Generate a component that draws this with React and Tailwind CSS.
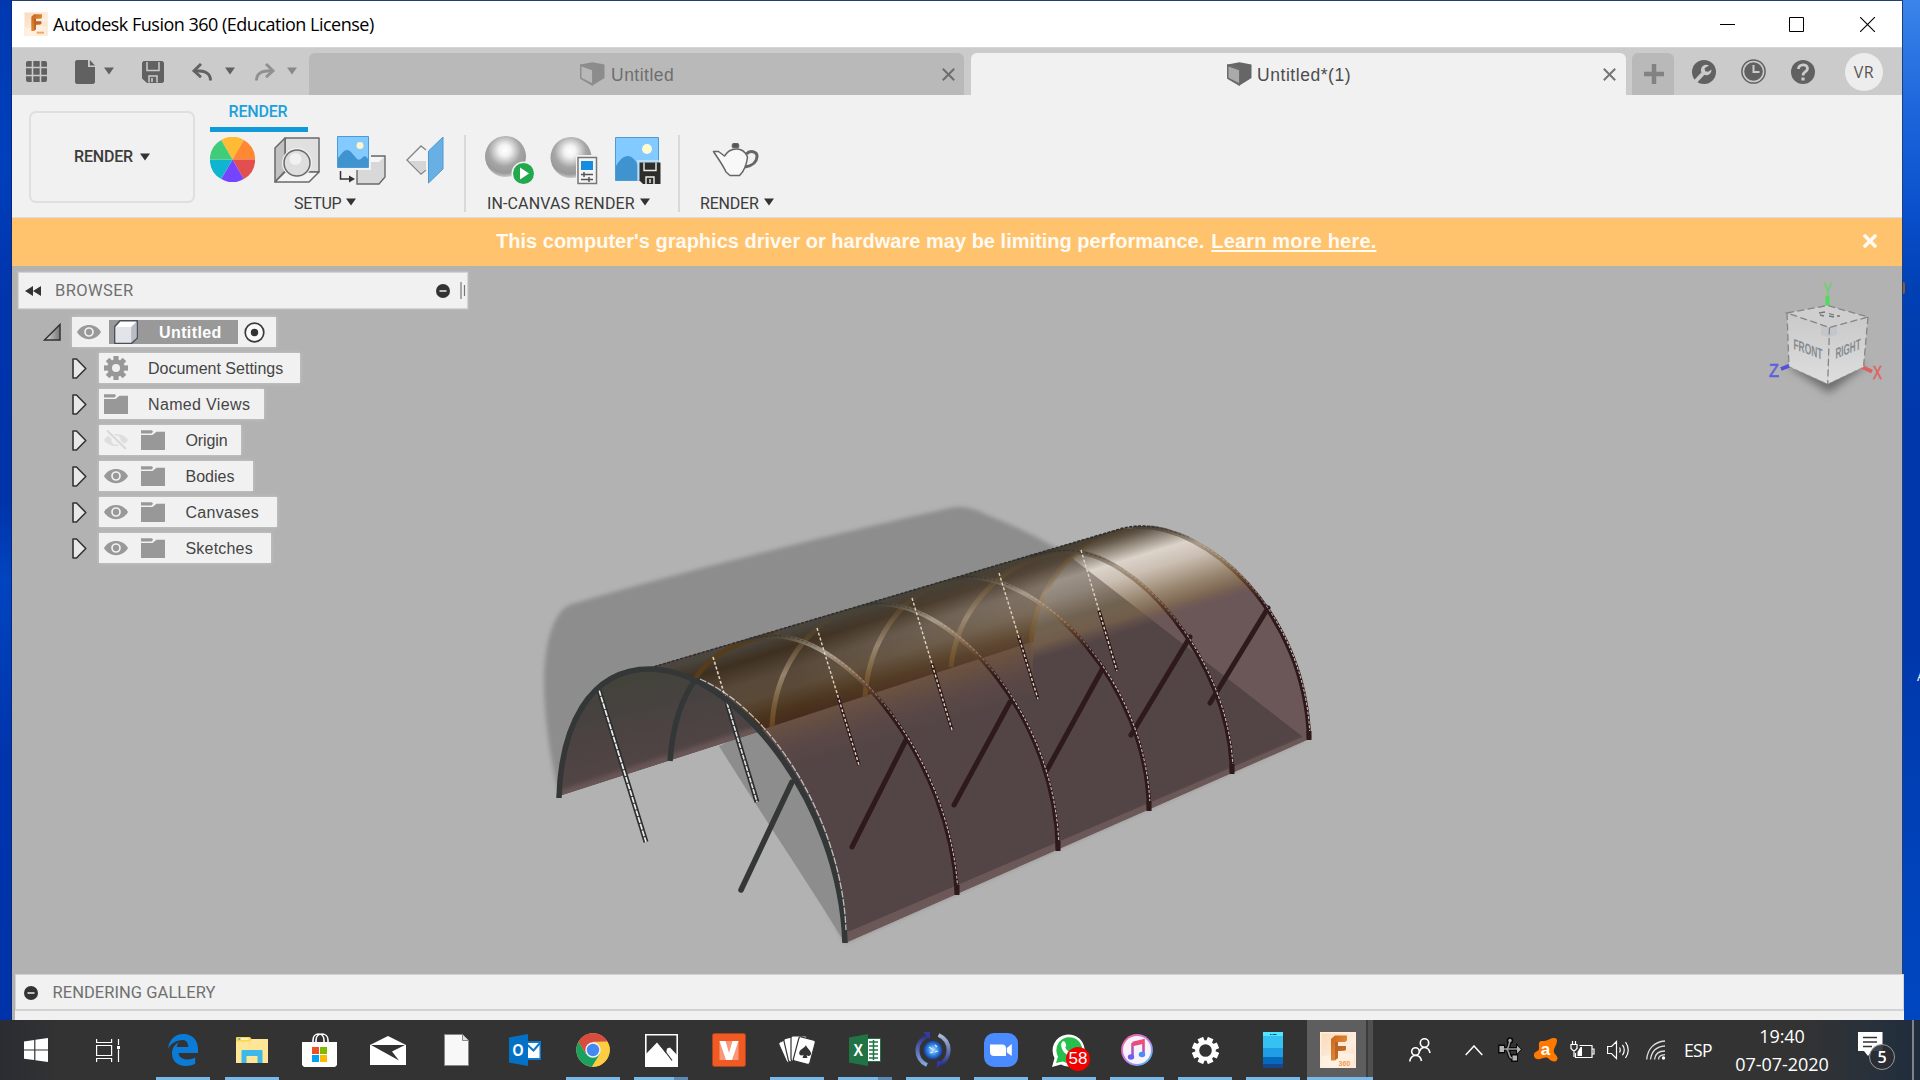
import React from "react";

const ui = "font-['Liberation_Sans',Arial,sans-serif]";
const cap = "font-['Roboto','Liberation_Sans',sans-serif]";
const win = "font-['Open_Sans','Noto_Sans',sans-serif]";

const Caret = ({ className = "" }) => (
  <svg width="10" height="8" viewBox="0 0 10 8" className={className}>
    <path d="M0 .5h10L5 7.5z" fill="currentColor" />
  </svg>
);

const Cross = ({ size = 13, w = 2 }) => (
  <svg width={size} height={size} viewBox="0 0 13 13">
    <path d="M.8.8l11.4 11.4M12.2.8L.8 12.2" stroke="currentColor" strokeWidth={w} fill="none" />
  </svg>
);

const FusionLogo = ({ size, label }) => (
  <svg width={size} height={size} viewBox="0 0 36 36" className="shrink-0">
    <defs>
      <linearGradient id="fl" x1="0" y1="0" x2="1" y2="1">
        <stop offset="0" stopColor="#fbd9b8" />
        <stop offset=".6" stopColor="#fdeee0" />
        <stop offset="1" stopColor="#f8d3ae" />
      </linearGradient>
      <linearGradient id="ff" x1="0" y1="0" x2="1" y2="1">
        <stop offset="0" stopColor="#c8651a" />
        <stop offset="1" stopColor="#eda04a" />
      </linearGradient>
    </defs>
    <path d="M0 0h36v36H0z" fill="#fdeedf" />
    <path d="M1.5 1.5h33v33h-33z" fill="url(#fl)" />
    <path d="M1.5 24L34 21v13.500H1.500z" fill="#fff3e6" opacity=".7" />
    <path d="M11 7l4-3.500h12v5l-2 1.500h-7v4h8v4l-2 1h-6v7l-3 2.500h-4z" fill="url(#ff)" />
    <path d="M15 10h3v4h8v4l-8 1v7l-3 2z" fill="#a8551a" opacity=".6" />
    {label ? (
      <text x="18.500" y="33.500" fontSize="7" fontWeight="700" fontFamily="Liberation Sans" fill="#ee9a55">360</text>
    ) : (
      <path d="M19 31h11" stroke="#f0a868" strokeWidth="3" />
    )}
  </svg>
);

function TitleBar() {
  return (
    <div className="flex h-[46px] shrink-0 items-center bg-white pl-[12px] pr-[27px]">
      <FusionLogo size={24} />
      <span className={`${win} ml-[5px] mt-[1px] text-[18px] tracking-[-0.5px] whitespace-nowrap text-black`}>
        Autodesk Fusion 360 (Education License)
      </span>
      <div className="ml-auto flex items-center">
        <svg width="15" height="15" viewBox="0 0 15 15"><path d="M0 7.500h15" stroke="#000" /></svg>
        <svg width="15" height="15" viewBox="0 0 15 15" className="ml-[54px]"><path d="M.5.5h14v14H.5z" fill="none" stroke="#000" /></svg>
        <svg width="15" height="15" viewBox="0 0 15 15" className="ml-[56px]"><path d="M0 0l15 15M15 0L0 15" stroke="#000" strokeWidth="1.1" /></svg>
      </div>
    </div>
  );
}

const DocCube = ({ dim }) => (
  <svg width="25" height="24" viewBox="0 0 25 24" className="shrink-0">
    <path d="M.5 2.500L12.500.3l12 2.200v13.500L12.500 23.500.5 16.500z" fill={dim ? "#8c8c8c" : "#666"} />
    <path d="M1.500 4.500l10.800 3.800v13L1.500 15.800z" fill={dim ? "#b8b8b8" : "#a9abab"} />
    <path d="M.5 2.500l12 3.700v17.300L.5 16.500z" fill="none" stroke={dim ? "#8f8f8f" : "#6c6c6c"} strokeWidth="1" />
  </svg>
);

function TabBar() {
  return (
    <div className="flex h-[48px] shrink-0 items-end bg-[#cbcbcb] border-t border-[#d6d6d6]">
      <div className="flex h-full w-[297px] shrink-0 items-center text-[#616161]">
        <svg width="21" height="21" viewBox="0 0 21 21" className="ml-[14px] shrink-0" fill="currentColor">
          <rect width="21" height="21" rx="2" />
          <path d="M6.500 0v21M14.500 0v21M0 6.500h21M0 14.500h21" stroke="#cbcbcb" strokeWidth="1.600" />
        </svg>
        <svg width="20" height="24" viewBox="0 0 20 24" className="ml-[28px] shrink-0" fill="currentColor">
          <path d="M1.500 0H13v7h7v15.500L18.500 24h-17L0 22.500v-21z" />
          <path d="M14.800 0L20 5.400h-5.200z" />
        </svg>
        <Caret className="ml-[9px] mb-[2px] shrink-0" />
        <svg width="22" height="22" viewBox="0 0 22 22" className="ml-[28px] shrink-0">
          <path d="M1.500 0h19L22 1.500v19L20.500 22H5l-5-4.500v-16z" fill="currentColor" />
          <path d="M5 1v8.500h12V1M7 21.500V15h8v6.500" fill="none" stroke="#cbcbcb" strokeWidth="1.500" />
          <path d="M10 17v4" stroke="#cbcbcb" strokeWidth="1.600" />
        </svg>
        <svg width="20" height="18" viewBox="0 0 20 18" className="ml-[28px] shrink-0" fill="none" stroke="currentColor" strokeWidth="2.900">
          <path d="M18.500 17.500C18.500 10.500 14 7.600 2.500 7.800" />
          <path d="M9 1L2 7.800l7 6.400" />
        </svg>
        <Caret className="ml-[13px] mb-[2px] shrink-0" />
        <svg width="20" height="18" viewBox="0 0 20 18" className="ml-[20px] shrink-0 text-[#909090]" fill="none" stroke="currentColor" strokeWidth="2.900">
          <path d="M1.500 17.500C1.500 10.500 6 7.600 17.500 7.800" />
          <path d="M11 1l7 6.800-7 6.400" />
        </svg>
        <Caret className="ml-[12px] mb-[2px] shrink-0 text-[#8a8a8a]" />
      </div>
      <div className="flex h-[42px] w-[655px] items-center rounded-t-[6px] bg-[#b9b9b9] pr-[9px] text-[#6e6e6e]">
        <div className="ml-[271px]"><DocCube dim /></div>
        <span className={`${ui} ml-[6px] mt-[2px] text-[17.5px] tracking-[0.5px]`}>Untitled</span>
        <span className="ml-auto"><Cross /></span>
      </div>
      <div className="ml-[7px] flex h-[42px] w-[655px] items-center rounded-t-[6px] bg-[#f1f1f1] pr-[10px] text-[#4c4c4c]">
        <div className="ml-[256px]"><DocCube /></div>
        <span className={`${ui} ml-[5px] mt-[2px] text-[17.5px] tracking-[0.55px]`}>Untitled*(1)</span>
        <span className="ml-auto text-[#757575]"><Cross /></span>
      </div>
      <div className="ml-[6px] flex h-[42px] w-[42px] items-center justify-center rounded-t-[6px] bg-[#b9b9b9] pl-[1px]">
        <svg width="20" height="20" viewBox="0 0 20 20"><path d="M10 0v20M0 10h20" stroke="#828282" strokeWidth="4.500" /></svg>
      </div>
      <div className="flex h-full flex-1 items-center pl-[18px]">
        <svg width="24" height="24" viewBox="0 0 24 24">
          <circle cx="12" cy="12" r="12" fill="#616161" />
          <path d="M3.500 21.500l7.500-8" stroke="#cbcbcb" strokeWidth="4" />
          <path d="M17 5.500a5.300 5.300 0 1 0 2.500 4l-3.300 2.300-3-.6-.6-3z" fill="#cbcbcb" />
        </svg>
        <svg width="25" height="25" viewBox="0 0 25 25" className="ml-[25px]">
          <circle cx="12.500" cy="12.500" r="11.600" fill="none" stroke="#616161" strokeWidth="1.500" />
          <circle cx="12.500" cy="12.500" r="9.300" fill="#616161" />
          <path d="M12.500 6v7h6" fill="none" stroke="#cbcbcb" strokeWidth="2" />
        </svg>
        <svg width="24" height="24" viewBox="0 0 24 24" className="ml-[25px]">
          <circle cx="12" cy="12" r="12" fill="#616161" />
          <path d="M7.500 9c0-5.500 9-5.500 9-.5 0 3.500-4.500 3-4.500 7" fill="none" stroke="#cbcbcb" strokeWidth="2.800" />
          <path d="M10.400 17.500h3.200v3h-3.200z" fill="#cbcbcb" />
        </svg>
        <div className={`${win} ml-[30px] flex size-[38px] items-center justify-center rounded-full bg-[#ededed] text-[16px] tracking-[0.5px] text-[#555]`}>VR</div>
      </div>
    </div>
  );
}

const Sphere = ({ id, cx, cy, r }) => (
  <>
    <defs>
      <radialGradient id={id} cx=".48" cy=".35" r=".65">
        <stop offset="0" stopColor="#fff" />
        <stop offset=".22" stopColor="#f2f2f2" />
        <stop offset=".6" stopColor="#a5a5a5" />
        <stop offset=".85" stopColor="#999" />
        <stop offset="1" stopColor="#c9c9c9" />
      </radialGradient>
    </defs>
    <circle cx={cx} cy={cy} r={r} fill={`url(#${id})`} />
  </>
);

const Group = ({ label, width, pad, text, children }) => (
  <div className={`flex ${width} flex-col`}>
    <div className={`flex h-[61px] items-start ${pad}`}>{children}</div>
    <div className={`flex items-center ${text} ${cap} text-[16px] leading-[22px] text-[#3c3c3c] whitespace-nowrap`}>
      {label}
      <Caret className="ml-[5px] mb-[5px] text-[#333]" />
    </div>
  </div>
);

const wheel = ["#ffbb33", "#ff8833", "#e34f4f", "#7544ff", "#0fb5cf", "#40cc78"];

function Ribbon() {
  return (
    <div className="flex h-[123px] shrink-0 border-b border-[#dcdcdc] bg-[#f1f1f1]">
      <div className={`${cap} ml-[17px] mt-[16px] flex h-[92px] w-[166px] items-center justify-center rounded-[7px] border-2 border-[#dfdfdf] text-[16px] font-medium tracking-[-0.2px] text-[#3c3c3c]`}>
        RENDER
        <Caret className="ml-[7px] mb-[1px] text-[#333]" />
      </div>
      <div className="ml-[15px] flex flex-col">
        <div className={`${cap} flex h-[37px] w-[98px] items-center justify-center border-b-[5px] border-[#0f9ad9] pt-[2px] text-[16px] font-medium tracking-[-0.2px] text-[#1ba0dc]`}>
          <span className="ml-[-2px]">RENDER</span>
        </div>
        <div className="flex">
          <Group label="SETUP" width="w-[254px]" pad="pt-[5px]" text="pl-[84px] tracking-[-0.3px]">
            <svg width="45" height="45" viewBox="-22.500 -22.500 45 45">
              {wheel.map((c, i) => (
                <path key={c} d="M0 0L-11.300-19.600A22.600 22.600 0 0 1 11.300-19.600z" fill={c} transform={`rotate(${i * 60})`} />
              ))}
            </svg>
            <svg width="46" height="46" viewBox="0 0 46 46" className="ml-[19px]" stroke="#6a6a6a" strokeWidth="1.500" strokeLinejoin="round">
              <path d="M11 1h34v34H11z" fill="#e0e0e0" />
              <path d="M11 1v33L1 45V11z" fill="#c2c2c2" />
              <path d="M11 35h34L35 45H1z" fill="#f4f4f4" />
              <circle cx="23" cy="26" r="15" fill="#f1f1f1" stroke="none" />
              <circle cx="23" cy="26" r="13" fill="#dedede" />
              <circle cx="21.500" cy="22" r="6" fill="#f1f1f1" stroke="none" />
            </svg>
            <svg width="49" height="50" viewBox="0 0 49 50" className="-mt-[1px] ml-[17px]">
              <path d="M20 26l6-6h22v21l-6 7H20z" fill="#d8d8d8" stroke="#6a6a6a" strokeWidth="1.400" />
              <path d="M21 26l6-5h20l-5 5z" fill="#f6f6f6" />
              <path d="M0 0h34v34H0z" fill="#f1f1f1" />
              <path d="M.5.5h31v31H.5z" fill="#82caff" stroke="#4c9bd6" />
              <path d="M1 22l5-6q4-4 8 0l6 7q3 2 6-2 3-2 5 2v8H1z" fill="#3f93cf" />
              <circle cx="23" cy="9.500" r="3.500" fill="#fff6c8" />
              <path d="M3.500 35v8H13" fill="none" stroke="#333" strokeWidth="1.500" />
              <path d="M12 39.500l6 3.500-6 3.500z" fill="#333" />
            </svg>
            <svg width="38" height="48" viewBox="0 0 38 48" className="-mt-[1px] ml-[20px]">
              <path d="M20 14l-5-4L1 24l14 14 5-4" fill="#f4f4f4" stroke="#888" strokeWidth="1.400" />
              <path d="M3 25h17v8l-5 4z" fill="#d5d5d5" />
              <path d="M22.500 15L37 1v32L22.500 47z" fill="#68b0e4" stroke="#5099cf" />
            </svg>
          </Group>
          <div className="mt-[3px] h-[77px] w-[2px] bg-[#d9d9d9]" />
          <Group label="IN-CANVAS RENDER" width="w-[212px]" pad="pt-[3px] pl-[19px]" text="pl-[21px] tracking-[0.12px]">
            <svg width="50" height="50" viewBox="0 0 50 50">
              <Sphere id="s1" cx="20.500" cy="21.500" r="20.500" />
              <circle cx="38.500" cy="38.500" r="12" fill="#f1f1f1" />
              <circle cx="38.500" cy="38.500" r="10.500" fill="#22a94e" />
              <path d="M35 32.500l9 6-9 6z" fill="#fff" />
            </svg>
            <svg width="50" height="50" viewBox="0 0 50 50" className="ml-[15px]">
              <Sphere id="s2" cx="21" cy="22.500" r="20.500" />
              <path d="M26 20h24v30H26z" fill="#f1f1f1" />
              <path d="M28 22.500h18.500v26H28z" fill="#f5f5f5" stroke="#777" strokeWidth="1.500" />
              <path d="M31 26h12v9H31z" fill="#168de2" />
              <path d="M31 39.500h12M31 44.500h12M34 37v5M39 42v5" stroke="#555" strokeWidth="1.500" />
            </svg>
            <svg width="47" height="50" viewBox="0 0 47 50" className="ml-[15px]">
              <path d="M.5 2.500h43v43H.5z" fill="#82caff" stroke="#4c9bd6" />
              <path d="M1 31c7-12 15-14 22-1v15H1z" fill="#3f93cf" />
              <circle cx="32" cy="14" r="5" fill="#fffad0" />
              <path d="M22 25h25v25H22z" fill="#f1f1f1" opacity=".5" />
              <path d="M24.500 27.500h21v21.500H28l-3.500-3.500z" fill="#2d2d2a" />
              <path d="M29 27.500v8h12v-8M31 49v-7h8v7M35 44v4" fill="none" stroke="#eee" strokeWidth="1.400" />
            </svg>
          </Group>
          <div className="mt-[3px] h-[77px] w-[2px] bg-[#d9d9d9]" />
          <Group label="RENDER" width="w-[120px]" pad="pt-[11px] pl-[32px]" text="pl-[20px] tracking-[-0.2px]">
            <svg width="48" height="35" viewBox="0 0 48 35" fill="none" stroke="#666" strokeWidth="1.500" strokeLinejoin="round">
              <path d="M1.500 8.500h5l6 4.500c3-5 6-7 12-7s9 3 11 8c-.5 5-2 10-5 15l-3 3.500H18L14 29C11 22 5 14 1.500 8.500z" fill="#f8f8f8" />
              <path d="M21 4.500a3 3 0 1 1 5 0z" fill="#555" />
              <path d="M34.500 11c3-4 11-3 10.500 3-.5 6-6 9-12 10" stroke="#666" strokeWidth="3" />
            </svg>
          </Group>
        </div>
      </div>
    </div>
  );
}

function Banner() {
  return (
    <div className={`${ui} flex h-[48px] shrink-0 items-center bg-[#ffc26d] pb-[2px] pl-[484px] pr-[25px] text-[20px] font-bold text-[#fffaf2] whitespace-nowrap`}>
      <span className="tracking-[0.015px]">This computer's graphics driver or hardware may be limiting performance.</span>
      <span className="ml-[7px] underline decoration-2 underline-offset-2 tracking-[0.18px]">Learn more here.</span>
      <span className="ml-auto"><Cross size={14} w={3.4} /></span>
    </div>
  );
}

const Eye = ({ off }) =>
  off ? (
    <svg width="24" height="20" viewBox="0 0 24 20">
      <path d="M0 10C5 2 19 2 24 10 19 18 5 18 0 10z" fill="#dedede" />
      <circle cx="12" cy="10" r="4.500" fill="#f1f1f1" />
      <path d="M2 0l20 19" stroke="#f1f1f1" strokeWidth="5" />
      <path d="M3 .5l19 18.500" stroke="#d8d8d8" strokeWidth="2" />
    </svg>
  ) : (
    <svg width="24" height="16" viewBox="0 0 24 16">
      <path d="M0 8C5-1.500 19-1.500 24 8 19 17.500 5 17.500 0 8z" fill="#999" />
      <circle cx="12" cy="8" r="4" fill="none" stroke="#f1f1f1" strokeWidth="1.700" />
    </svg>
  );

const Folder = () => (
  <svg width="24" height="20" viewBox="0 0 24 20" fill="#989898">
    <path d="M0 .3h11l1 1.500-1.500 1.700H0z" />
    <path d="M0 5h11.500l4-3.200H24V20H0z" />
  </svg>
);

const Gear = () => (
  <svg width="24" height="24" viewBox="-12 -12 24 24">
    {[0, 45, 90, 135].map((a) => (
      <path key={a} d="M-2.600-12h5.200v24h-5.200z" fill="#989898" transform={`rotate(${a})`} />
    ))}
    <circle r="8.700" fill="#989898" />
    <circle r="4" fill="#f1f1f1" />
  </svg>
);

const MinusDot = () => (
  <svg width="14" height="14" viewBox="0 0 14 14">
    <circle cx="7" cy="7" r="7" fill="#333" />
    <path d="M3.500 7h7" stroke="#eee" strokeWidth="1.500" />
  </svg>
);

const nodes = [
  { name: "Document Settings", icon: "gear", w: "w-[201px]", t: "tracking-[0px]" },
  { name: "Named Views", icon: "folder", w: "w-[165px]", t: "tracking-[0.35px]" },
  { name: "Origin", eye: "off", w: "w-[142px]", t: "tracking-[-0.1px]" },
  { name: "Bodies", eye: "on", w: "w-[154px]", t: "tracking-[0px]" },
  { name: "Canvases", eye: "on", w: "w-[178px]", t: "tracking-[0.3px]" },
  { name: "Sketches", eye: "on", w: "w-[172px]", t: "tracking-[0.2px]" },
];

function BrowserPanel() {
  return (
    <div className="relative z-10 ml-[6px] mt-[6px] flex w-[450px] flex-col">
      <div className="flex h-[37px] items-center border border-[#d4d4d4] bg-[#f1f1f1] outline outline-[#c4c4c4]/50">
        <svg width="16" height="10" viewBox="0 0 16 10" className="ml-[6px] mt-[1px]"><path d="M8 0v10L0 5zM16 0v10L8 5z" fill="#333" /></svg>
        <span className={`${cap} ml-[14px] mt-[2px] text-[16.5px] tracking-[0.4px] text-[#707070]`}>BROWSER</span>
        <span className="ml-auto"><MinusDot /></span>
        <svg width="6" height="17" viewBox="0 0 6 17" className="ml-[10px] mr-[1px]"><path d="M1 0v17M4.500 3v11" stroke="#777" strokeWidth="1.200" /></svg>
      </div>
      <div className="mt-[8px] flex h-[30px] items-center">
        <svg width="18" height="18" viewBox="0 0 18 18" className="ml-[25px] mr-[11px]">
          <defs><linearGradient id="tr"><stop offset="0" stopColor="#ddd" /><stop offset="1" stopColor="#777" /></linearGradient></defs>
          <path d="M17 1.500V17H1.500z" fill="url(#tr)" stroke="#333" strokeWidth="1.500" />
        </svg>
        <div className="flex h-[30px] w-[204px] items-center bg-[#f1f1f1] pl-[5px] shadow-[0_0_4px_#c8c8c8]">
          <Eye />
          <div className="ml-[8px] flex h-[24px] w-[129px] items-center bg-[#999]">
            <svg width="24" height="24" viewBox="0 0 24 24" className="ml-[5px]" strokeLinejoin="round">
              <path d="M.8 6.500L6 .8h17.200V18l-5.500 5.200H.8z" fill="#fff" stroke="#4a4f5c" strokeWidth="1.600" />
              <path d="M1.600 7h15.500v15.400H1.600z" fill="#e2e4ea" />
              <path d="M17.100 7l5.300-5.300V17.600l-5.300 4.800z" fill="#b9bcc6" />
            </svg>
            <span className={`${ui} ml-[21px] mt-[1px] text-[16px] font-bold tracking-[0.4px] text-white`}>Untitled</span>
          </div>
          <svg width="21" height="21" viewBox="0 0 21 21" className="ml-[6px]">
            <circle cx="10.500" cy="10.500" r="9.300" fill="#fafafa" stroke="#3c3c3c" strokeWidth="1.700" />
            <circle cx="10.500" cy="10.500" r="3.700" fill="#333" />
          </svg>
        </div>
      </div>
      {nodes.map((n) => (
        <div key={n.name} className="mt-[6px] flex h-[30px] items-center">
          <svg width="15" height="21" viewBox="0 0 15 21" className="ml-[54px] mr-[12px]">
            <path d="M1 1h3.500L13.800 10.500 4.500 20H1z" fill="#e8e8e8" stroke="#333" strokeWidth="1.600" strokeLinejoin="round" />
          </svg>
          <div className={`flex h-[30px] ${n.w} items-center bg-[#f1f1f1] pl-[4.5px] shadow-[0_0_4px_#c8c8c8]`}>
            {n.eye && <div className="mr-[13.5px]"><Eye off={n.eye === "off"} /></div>}
            {n.icon === "gear" ? <Gear /> : <Folder />}
            <span className={`${ui} ${n.t} ml-[20.5px] mt-[1px] whitespace-nowrap text-[16px] text-[#454545]`}>{n.name}</span>
          </div>
        </div>
      ))}
    </div>
  );
}

const ribs = [
  "M737 642Q755 637 775 636C850 638 950 760 957 893",
  "M847 609Q862 604 880 604C955 604 1055 715 1058 849",
  "M933 583Q948 578 966 577C1045 576 1147 685 1149 809",
  "M1030 557Q1048 551 1066 551C1135 550 1230 660 1232 772",
  "M1137 527C1207 524 1305 612 1309 738",
];
const farRibs = [
  "M772 727C774 680 800 614 877 602",
  "M865 697C868 650 895 588 963 576",
  "M951 667C956 620 990 563 1063 551",
  "M1031 642C1036 595 1065 540 1132 529",
];
const poles = [
  [817, 628, 859, 765],
  [912, 598, 952, 730],
  [999, 573, 1038, 699],
  [1081, 550, 1117, 671],
];
const braces = [
  [907, 738, 852, 847],
  [1010, 702, 954, 805],
  [1103, 668, 1047, 770],
  [1190, 637, 1131, 735],
  [1268, 608, 1210, 703],
];
const frontArch = "M559 798C561 728 588 669 650 669C735 670 840 800 845 943";
const shell = "M645 669L1113 531Q1125 527 1137 526C1207 524 1305 612 1309 739L845 943C840 800 735 670 650 669z";
const crest = "M640 671L1113 531.500L1137 527L1360 500V1000H640z";

function Model() {
  return (
    <svg width="1890" height="708" viewBox="12 266 1890 708" className="absolute inset-0">
      <defs>
        <filter id="b2" x="-5%" y="-5%" width="110%" height="110%"><feGaussianBlur stdDeviation="2" /></filter>
        <filter id="b1"><feGaussianBlur stdDeviation="0.5" /></filter>
        <clipPath id="cs"><path d={shell} /></clipPath>
        <clipPath id="cc"><path d={crest} /></clipPath>
        <clipPath id="ci"><path d="M559 796C561 728 588 669 650 669C700 670 735 700 761 731z" /></clipPath>
        <linearGradient id="amber" gradientUnits="userSpaceOnUse" x1="1000" y1="564" x2="1027" y2="650">
          <stop offset="0" stopColor="#4a463e" />
          <stop offset=".18" stopColor="#3e3021" />
          <stop offset=".42" stopColor="#57483a" />
          <stop offset=".62" stopColor="#5a4936" />
          <stop offset=".84" stopColor="#4a331c" />
          <stop offset="1" stopColor="#45291f" />
        </linearGradient>
        <linearGradient id="shine" gradientUnits="userSpaceOnUse" x1="1110" y1="531" x2="1140" y2="628">
          <stop offset="0" stopColor="#3c3428" />
          <stop offset=".1" stopColor="#64594a" />
          <stop offset=".32" stopColor="#dcd3ca" />
          <stop offset=".48" stopColor="#cbbfb3" />
          <stop offset=".72" stopColor="#98866f" />
          <stop offset=".87" stopColor="#7d6653" />
          <stop offset="1" stopColor="#6a5656" stopOpacity="0" />
        </linearGradient>
        <linearGradient id="shade" gradientUnits="userSpaceOnUse" x1="1110" y1="531" x2="1140" y2="628">
          <stop offset="0" stopColor="#33291e" stopOpacity=".35" />
          <stop offset=".7" stopColor="#33291e" stopOpacity=".42" />
          <stop offset="1" stopColor="#33291e" stopOpacity="0" />
        </linearGradient>
        <linearGradient id="lift" gradientUnits="userSpaceOnUse" x1="780" y1="640" x2="1090" y2="560">
          <stop offset="0" stopColor="#fff" stopOpacity="0" />
          <stop offset=".5" stopColor="#fff" stopOpacity=".2" />
          <stop offset="1" stopColor="#fff" stopOpacity=".4" />
        </linearGradient>
        <mask id="mR" maskUnits="userSpaceOnUse" x="500" y="480" width="850" height="500"><path d="M500 480h850v500H500z" fill="url(#lift)" /></mask>
        <linearGradient id="under" gradientUnits="userSpaceOnUse" x1="770" y1="724" x2="785" y2="775">
          <stop offset="0" stopColor="#735740" stopOpacity=".75" />
          <stop offset=".55" stopColor="#5e4847" stopOpacity=".6" />
          <stop offset="1" stopColor="#5a4848" stopOpacity="0" />
        </linearGradient>
        <linearGradient id="inner" gradientUnits="userSpaceOnUse" x1="640" y1="672" x2="660" y2="770">
          <stop offset="0" stopColor="#42433a" />
          <stop offset=".35" stopColor="#474240" />
          <stop offset="1" stopColor="#534545" />
        </linearGradient>
        <linearGradient id="ribc" gradientUnits="userSpaceOnUse" x1="1000" y1="564" x2="1030" y2="668">
          <stop offset="0" stopColor="#35342f" stopOpacity=".5" />
          <stop offset=".12" stopColor="#5d5242" />
          <stop offset=".32" stopColor="#a89a8a" />
          <stop offset=".55" stopColor="#8d7458" />
          <stop offset=".78" stopColor="#5c3c28" />
          <stop offset="1" stopColor="#2e181a" />
        </linearGradient>
        <linearGradient id="dash" gradientUnits="userSpaceOnUse" x1="1000" y1="564" x2="1060" y2="770">
          <stop offset="0" stopColor="#2a2a28" />
          <stop offset=".1" stopColor="#4a443a" />
          <stop offset=".2" stopColor="#d8cdc0" stopOpacity=".55" />
          <stop offset=".45" stopColor="#b9a9a0" stopOpacity=".6" />
          <stop offset=".65" stopColor="#f0e6e0" />
          <stop offset="1" stopColor="#e8dfdb" />
        </linearGradient>
        <linearGradient id="farc" gradientUnits="userSpaceOnUse" x1="1000" y1="564" x2="1027" y2="650">
          <stop offset="0" stopColor="#55401f" stopOpacity=".1" />
          <stop offset=".2" stopColor="#6f5637" stopOpacity=".8" />
          <stop offset=".45" stopColor="#a08e78" />
          <stop offset=".75" stopColor="#7d6038" />
          <stop offset="1" stopColor="#6a4520" />
        </linearGradient>
      </defs>

      <path d="M559 793C550 760 544 715 544 680C545 635 556 609 572 604C680 572 850 530 950 508Q965 504 985 514C1020 528 1040 538 1070 556L1305 740L845 943C810 880 775 810 722 740L650 700z" fill="#8d8d8d" filter="url(#b2)" />
      <path d="M561 799L722 745C765 815 805 880 838 938L700 960L560 880z" fill="#b2b2b2" />
      <path d="M719 746L761 729C795 775 838 860 842 938C806 880 760 812 719 746z" fill="#8d8d8d" filter="url(#b1)" />

      <g clipPath="url(#ci)">
        <path d="M540 660h240v150H540z" fill="url(#inner)" />
        <path d="M559 797L762 731" stroke="#6b5656" strokeWidth="12" filter="url(#b2)" />
      </g>
      <path d="M670 761C673 722 682 698 697 677" fill="none" stroke="#343737" strokeWidth="5.500" />

      <g clipPath="url(#cs)">
        <path d="M640 500h700v450H640z" fill="#6b5757" />
        <path d="M640 500H1000L1072 558L1303 737L850 931L640 900z" fill="#534545" />
        <path d="M1031 642C1036 595 1065 540 1132 529L1150 500H1340V760L1031 760z" fill="url(#shine)" />
        <path d="M1031 700V642C1034 610 1050 575 1072 558L1240 688z" fill="url(#shade)" />
        <path d="M690 752L1033 640L1033 760L720 830z" fill="url(#under)" />
        <path d="M640 673L1113 529L1132 529C1065 540 1036 595 1031 642L770 727L700 750L640 740z" fill="url(#amber)" />
        <g mask="url(#mR)">
          <path d="M700 652L1113 528L1132 529C1065 540 1036 595 1031 642L770 727z" fill="url(#shine)" />
        </g>
        <path d="M845 943L1309 739" stroke="#6d5959" strokeWidth="7" filter="url(#b2)" />
        <g fill="none" strokeWidth="5" filter="url(#b1)">
          <path d="M690 688C702 662 725 644 775 634" stroke="#553c1c" />
          {farRibs.map((d) => <path key={d} d={d} stroke="url(#farc)" opacity=".85" />)}
        </g>
      </g>
      <path d="M650 668L1113 531Q1125 527 1137 526Q1160 525 1190 538" fill="none" stroke="#2e2f2c" strokeWidth="1.600" strokeDasharray="3 1.500" />

      <g stroke="#2e191b" strokeWidth="5" strokeLinecap="round">
        {braces.map((b) => <line key={b[0]} x1={b[0]} y1={b[1]} x2={b[2]} y2={b[3]} />)}
      </g>
      <g fill="none" clipPath="url(#cc)">
        {ribs.map((d) => (
          <g key={d}>
            <path d={d} stroke="url(#ribc)" strokeWidth="4.400" />
            <path d={d} stroke="url(#dash)" strokeWidth="1.100" strokeDasharray="3 1.600" opacity=".8" transform="translate(1 -.5)" />
          </g>
        ))}
      </g>
      <g fill="#2e191b">
        <path d="M954.500 885h5v10h-5zM1055.500 841h5v10h-5zM1146.500 801h5v10h-5zM1229.500 764h5v10h-5zM1306.500 731h5v9h-5z" />
      </g>
      {poles.map((p) => (
        <g key={p[0]}>
          <line x1={(p[0] + p[2]) / 2} y1={(p[1] + p[3]) / 2} x2={p[2]} y2={p[3]} stroke="#2e191b" strokeWidth="3.400" />
          <line x1={p[0]} y1={p[1]} x2={p[2]} y2={p[3]} stroke="#e3d3bf" strokeWidth="1.400" strokeDasharray="3 2" />
        </g>
      ))}

      <line x1="713" y1="657" x2="727" y2="703" stroke="#e3d3bf" strokeWidth="1.600" strokeDasharray="3 2" />
      <line x1="727" y1="703" x2="757" y2="802" stroke="#2c2e2e" strokeWidth="5" />
      <line x1="727" y1="703" x2="757" y2="802" stroke="#e0e0e0" strokeWidth="1.600" strokeDasharray="5 1" />
      <line x1="599" y1="690" x2="646" y2="842" stroke="#2c2e2e" strokeWidth="5" />
      <line x1="599" y1="690" x2="646" y2="842" stroke="#ececec" strokeWidth="1.700" strokeDasharray="6 1" />
      <line x1="792" y1="782" x2="741" y2="890" stroke="#353636" strokeWidth="5.500" strokeLinecap="round" />
      <path d={frontArch} fill="none" stroke="#343737" strokeWidth="5.500" />
      <path d="M700 679C775 712 842 825 846 930" fill="none" stroke="#dcdcdc" strokeWidth="1.300" strokeDasharray="7 1.500" opacity=".8" />
    </svg>
  );
}

function ViewCube() {
  return (
    <svg width="150" height="130" viewBox="1760 276 150 130" className="absolute left-[1748px] top-[10px]">
      <defs>
        <linearGradient id="cl" x1="0" y1="0" x2="0" y2="1"><stop offset="0" stopColor="#c9c9c9" /><stop offset="1" stopColor="#dedede" /></linearGradient>
        <filter id="cb" x="-40%" y="-40%" width="180%" height="180%"><feGaussianBlur stdDeviation="4" /></filter>
      </defs>
      <path d="M1788 366L1828 350L1865 366L1829 393z" fill="#6d6d6d" filter="url(#cb)" />
      <path d="M1827.500 296v10" stroke="#4fdc58" strokeWidth="4" />
      <path d="M1790 365.500l-9 3.500" stroke="#5252d8" strokeWidth="4" />
      <path d="M1862 367l10 4.500" stroke="#dc6262" strokeWidth="4" />
      <g fontFamily="Liberation Sans" fontSize="18" fontWeight="400" strokeWidth=".6">
        <text x="1823" y="296" fill="#70d070" stroke="#70d070" textLength="9" lengthAdjust="spacingAndGlyphs">Y</text>
        <text x="1769" y="377" fill="#6060dd" stroke="#6060dd" textLength="10" lengthAdjust="spacingAndGlyphs">Z</text>
        <text x="1873" y="379" fill="#dd6464" stroke="#dd6464" textLength="9" lengthAdjust="spacingAndGlyphs">X</text>
      </g>
      <path d="M1787 313L1829.500 327.500L1827.700 384L1789 366.500z" fill="url(#cl)" />
      <path d="M1829.500 327.500L1868 317L1863.500 367L1827.700 384z" fill="url(#cl)" />
      <path d="M1787 313L1827.500 305.500L1868 317L1829.500 327.500z" fill="#cfcfcf" />
      <path d="M1821 325l8.500 2.500 7.500-2v9l-8 2.500-8-2z" fill="#c3c6ca" />
      <path d="M1787 313L1827.500 305.500L1868 317L1829.500 327.500zM1787 313L1789 366.500M1868 317L1863.500 367M1829.500 327.500L1827.700 384" fill="none" stroke="#858585" strokeWidth="1.300" strokeDasharray="7 3.500" />
      <path d="M1789 366.500L1827.700 384L1863.500 367" fill="none" stroke="#999" strokeWidth=".8" strokeDasharray="4 3" />
      <g fontFamily="Liberation Sans" fontWeight="700" fill="#858a90">
        <text transform="matrix(.93 .34 0 1 1793.500 349)" fontSize="15" textLength="31" lengthAdjust="spacingAndGlyphs">FRONT</text>
        <text transform="matrix(.93 -.38 0 1 1835.500 359)" fontSize="15" textLength="27" lengthAdjust="spacingAndGlyphs">RIGHT</text>
      </g>
      <path d="M1819 313l6-1M1820 315l4 1M1829 313.500l5 1.500M1829 316l5 1M1837 316l3 0" stroke="#777" strokeWidth="1.300" />
    </svg>
  );
}

const I = ({ w = 36, h = 36, vb, children }) => (
  <svg width={w} height={h} viewBox={vb || `0 0 ${w} ${h}`} className="shrink-0">{children}</svg>
);

const EdgeIcon = () => (
  <I w={30} h={32}>
    <path fill="#0a7cd8" d="M0 14.500C1 6 7 0 15.500 0 24.500 0 30 6.500 30 15v4H10.500c.3 4.300 4 6.500 9 6.500 3 0 5.500-.8 7.700-2v6.300C24.500 31.300 21 32 17.500 32 9.500 32 4 27 4 19.500c0-5 2.500-9 7-11.500-1.300 1.500-2 3-2.200 5h11.400c0-4.500-2-7-6-7C8.500 6 3 9.500 0 14.500z" />
  </I>
);
const ExplorerIcon = () => (
  <I w={32} h={26}>
    <path d="M0 1q0-1 1-1h13l1.500 2H32v24H0z" fill="#ffd54b" />
    <path d="M0 4.500h14l2-2.500h15l1 1v23H0z" fill="#ffe596" />
    <path d="M2.500 2h2" stroke="#2aa8e0" strokeWidth="1.500" /><path d="M4.500 2h8" stroke="#fff" strokeWidth="1.300" />
    <path d="M5.500 26V14q0-1 1-1h19q1 0 1 1v12h-5v-7h-11v7z" fill="#3db8ea" />
  </I>
);
const StoreIcon = () => (
  <I w={35} h={34}>
    <path d="M11 10V7c0-8 11-8 11 0v3M14 10V7c0-8 12-8 12 0v3" fill="none" stroke="#fff" strokeWidth="1.600" />
    <path d="M0 9h35v23l-2 2H2l-2-2z" fill="#fff" />
    <path d="M10 14h7v7h-7z" fill="#f25022" /><path d="M18 14h7v7h-7z" fill="#7fba00" />
    <path d="M10 22h7v7h-7z" fill="#00a4ef" /><path d="M18 22h7v7h-7z" fill="#ffb900" />
  </I>
);
const MailIcon = () => (
  <I w={36} h={29}>
    <path d="M0 9L18 0l18 9v20H0z" fill="#fff" />
    <path d="M1 9h34L22 15.500l7 9L1 9z" fill="#333" />
  </I>
);
const DocIcon = () => (
  <I w={25} h={32}>
    <path d="M.5.5h18l6 6v25H.5z" fill="#f8f8f8" stroke="#888" />
    <path d="M18.500.5v6h6" fill="#ddd" stroke="#888" />
  </I>
);
const OutlookIcon = () => (
  <I w={32} h={32}>
    <path d="M17 7h15v19H17z" fill="#0a78d0" />
    <path d="M18.500 9H30.500v15h-12z" fill="#fff" />
    <path d="M18.500 11l6 5.500L31 9" stroke="#0a78d0" strokeWidth="2" fill="none" />
    <path d="M0 3.500L19 0v32L0 28.500z" fill="#0372c6" />
    <text x="3.500" y="22" fontFamily="Liberation Sans" fontSize="16.500" fontWeight="700" fill="#fff" textLength="11" lengthAdjust="spacingAndGlyphs">O</text>
  </I>
);
const ChromeIcon = () => (
  <I w={34} h={34} vb="-17 -17 34 34">
    <circle r="16.700" fill="#ffcd41" />
    <path d="M0-8.300H14.500A16.700 16.700 0 0 0-14.500-8.300L-7 4z" fill="#d84b3f" />
    <path d="M-14.500-8.300A16.700 16.700 0 0 0-1 16.700L7 4H-7z" fill="#1aa15f" />
    <path d="M-1 16.700L7.300 3.500 7.300-8.300H14.500A16.700 16.700 0 0 1-1 16.700z" fill="#ffcd41" />
    <circle r="7.700" fill="#f1f1f1" /><circle r="6.200" fill="#4688f1" />
  </I>
);
const PhotosIcon = () => (
  <I w={33} h={33}>
    <path d="M.8.8h31.400v31.400H.8z" fill="none" stroke="#fff" strokeWidth="1.600" />
    <path d="M1 20L12 8.500l9 11 1-5 3-1 8 8.500v11H1z" fill="#fff" />
    <path d="M20 17l7 9.500" stroke="#333" strokeWidth="1.200" />
  </I>
);
const VIcon = () => (
  <I w={34} h={34}>
    <rect x=".5" y=".5" width="33" height="33" rx="2" fill="#f15a22" stroke="#a9431f" />
    <path d="M7.500 8h19v19h-19z" fill="#f79878" />
    <path d="M7.500 8h6l3.500 12L20.500 8h6L20 27h-6z" fill="#fff" />
  </I>
);
const CardsIcon = () => (
  <I w={36} h={32}>
    <g fill="#fff" stroke="#333" strokeWidth="1.200">
      <rect x="3" y="5" width="15" height="22" rx="2" transform="rotate(-24 10 16)" />
      <rect x="7" y="3" width="15" height="24" rx="2" transform="rotate(-13 14 15)" />
      <rect x="12" y="2" width="16" height="25" rx="2" />
      <rect x="17" y="4" width="17" height="25" rx="2" transform="rotate(15 25 16)" />
    </g>
    <path d="M27 11c-1 3-6.500 4-6.800 8 0 3 3.500 3 4.500 1.600L23.500 24h5l-1-3c2 2 5 .5 4.500-2-.5-3-4.500-5-5-8z" fill="#333" />
  </I>
);
const ExcelIcon = () => (
  <I w={32} h={32}>
    <path d="M18 4.500h13.500v23H18z" fill="#fff" stroke="#1f7445" />
    <path d="M20 8h9M20 12h9M20 16h9M20 20h9M20 24h9M24.500 6v20" stroke="#1f7445" strokeWidth="1.500" />
    <path d="M0 3.500L19 0v32L0 28.500z" fill="#217346" />
    <text x="4.500" y="21.800" fontFamily="Liberation Sans" fontSize="16" fontWeight="700" fill="#fff" textLength="9.500" lengthAdjust="spacingAndGlyphs">X</text>
  </I>
);
const SyncIcon = () => (
  <I>
    <defs>
      <radialGradient id="gl"><stop offset="0" stopColor="#bfe8ff" /><stop offset=".5" stopColor="#3c8fe8" /><stop offset="1" stopColor="#123a9c" /></radialGradient>
      <linearGradient id="sa" x1="0" y1="0" x2="0" y2="1"><stop offset="0" stopColor="#2a3184" /><stop offset="1" stopColor="#85a9dd" /></linearGradient>
      <linearGradient id="sb" x1="0" y1="0" x2="0" y2="1"><stop offset="0" stopColor="#a9bfd8" /><stop offset="1" stopColor="#28308a" /></linearGradient>
    </defs>
    <circle cx="18" cy="18" r="9.500" fill="url(#gl)" />
    <path d="M14 15l3 2M20 13l2 2M15 21l3-1M20 20l3-1" stroke="#d5f0ff" strokeWidth="1.200" />
    <path d="M13.500 3.500C-1 9-1 27 12 33" fill="none" stroke="url(#sa)" strokeWidth="4" />
    <path d="M23.500 3C37 9 37 27 23.500 33" fill="none" stroke="url(#sb)" strokeWidth="4" />
    <path d="M8 0h7v7zM22 36v-7h6z" fill="#343ba0" />
  </I>
);
const ZoomIcon = () => (
  <I w={34} h={34}>
    <rect width="34" height="34" rx="10" fill="#4a8cff" />
    <path d="M6 11.500h12q4 0 4 4V23H10q-4 0-4-4zM22.800 15l5-4v12l-5-3.500z" fill="#fff" />
  </I>
);
const WhatsIcon = () => (
  <div className="relative">
    <I w={34} h={33}>
      <path d="M0 33l2.500-9A16 16 0 1 1 9 30.500z" fill="#fff" />
      <path d="M4 29l2-6.500A13 13 0 1 1 11 27.500z" fill="#28c04c" />
      <path d="M10 8c2-1.500 3-.5 4 2.500 1 2-2 2 .5 5s4 3 5 2 2-1 4.500 1c-1 6-14 4-15-8z" fill="#fff" />
    </I>
    <div className={`${ui} absolute left-[14px] top-[13px] flex size-[24px] items-center justify-center rounded-full bg-[#f40000] text-[17px] text-white`}>58</div>
  </div>
);
const MusicIcon = () => (
  <I w={32} h={32}>
    <defs>
      <linearGradient id="mr" x1="0" y1="0" x2="1" y2="1"><stop offset="0" stopColor="#fb5c8a" /><stop offset=".5" stopColor="#c67cf0" /><stop offset="1" stopColor="#35c8fa" /></linearGradient>
      <linearGradient id="mn" gradientUnits="userSpaceOnUse" x1="0" y1="6" x2="0" y2="24"><stop offset="0" stopColor="#fb4a6a" /><stop offset="1" stopColor="#7d62f0" /></linearGradient>
    </defs>
    <circle cx="16" cy="16" r="15.900" fill="url(#mr)" /><circle cx="16" cy="16" r="14" fill="#f8f2fa" />
    <path d="M11.500 9l11-2.500v13M11.500 9v13.500M11.500 11l11-2.500" fill="none" stroke="url(#mn)" strokeWidth="2.600" />
    <ellipse cx="10" cy="23" rx="3.200" ry="2.700" fill="#6a5ff0" /><ellipse cx="21" cy="20.500" rx="3.200" ry="2.700" fill="#4b8df5" />
  </I>
);
const SettingsIcon = () => (
  <I w={27} h={27} vb="-13.500 -13.500 27 27">
    {[22.5, 67.5, 112.5, 157.5].map((a) => <path key={a} d="M-3-13.500h6v27h-6z" fill="#fff" transform={`rotate(${a})`} />)}
    <circle r="10.300" fill="#fff" /><circle r="6.300" fill="#333" />
  </I>
);
const PhoneIcon = () => (
  <I w={20} h={36}>
    <path d="M0 0h20v4H0z" fill="#50e6ff" /><path d="M0 4h20v12H0z" fill="#35c1f1" /><path d="M0 16h20v9H0z" fill="#1f9de5" />
    <path d="M0 25h20v7H0z" fill="#0669bc" /><path d="M0 32h20v4H0z" fill="#15478d" />
    <path d="M7 2.500h1.500M9.500 2.500h4" stroke="#0a4a90" />
  </I>
);

const apps = [
  { I: EdgeIcon, run: 1, w: "w-[69px]" }, { I: ExplorerIcon, run: 1, w: "w-[69px]" },
  { I: StoreIcon, w: "w-[67px]" }, { I: MailIcon, w: "w-[69px]" }, { I: DocIcon, w: "w-[69px]" }, { I: OutlookIcon },
  { I: ChromeIcon, run: 1 }, { I: PhotosIcon, run: 2 }, { I: VIcon }, { I: CardsIcon, run: 1 },
  { I: ExcelIcon, run: 2 }, { I: SyncIcon, run: 1 }, { I: ZoomIcon, run: 1 }, { I: WhatsIcon, run: 1 },
  { I: MusicIcon, run: 1 }, { I: SettingsIcon, run: 1 }, { I: PhoneIcon, run: 1 },
];

function Taskbar() {
  return (
    <div className="flex h-[60px] w-full shrink-0 bg-[linear-gradient(90deg,#2a2c33_0,#333_60px,#333_1800px,#26303c_1885px,#1f2c3c_1920px)]">
      <div className="flex w-[72px] items-center justify-center">
        <I w={24} h={24}><path d="M0 3.500L10.200 2v9.500H0zM11.400 1.800L24 0v11.500H11.400zM0 12.600h10.200V22L0 20.700zM11.400 12.600H24V24l-12.600-1.700z" fill="#fff" /></I>
      </div>
      <div className="flex w-[76px] items-center pl-[24px]">
        <I w={24} h={23}>
          <g fill="none" stroke="#fff" strokeWidth="1.200">
            <path d="M.6 0v3.500h15V0M.6 6.500h15v10H.6zM.6 23v-3.500h15V23M22.500 0v6M22.500 10.500V23" />
          </g>
          <path d="M21 7h3v3h-3z" fill="#fff" />
        </I>
      </div>
      {apps.map(({ I: Icon, run, w }, i) => (
        <div key={i} className={`flex ${w || "w-[68px]"} flex-col items-center`}>
          <div className="flex h-[57px] items-center pt-[3px]"><Icon /></div>
          {run === 1 && <div className="h-[3px] w-[54px] bg-[#76b9ed]" />}
          {run === 2 && <div className="flex h-[3px] w-[54px]"><div className="w-[40px] bg-[#76b9ed]" /><div className="flex-1 bg-[#5a8ab4]" /></div>}
        </div>
      ))}
      <div className="flex w-[66px] flex-col">
        <div className="flex flex-1">
          <div className="flex w-[59px] items-center justify-center bg-[#5e5e5e] pl-[2px] pt-[3px]"><FusionLogo size={36} label /></div>
          <div className="w-[2px] bg-[#3c3c3c]" />
          <div className="flex-1 bg-[#505050]" />
        </div>
        <div className="h-[3px] bg-[#76b9ed]" />
      </div>
      <div className={`${win} flex flex-1 items-center text-[17.500px] text-white`}>
        <svg width="22" height="24" viewBox="0 0 22 24" className="ml-[36px]" fill="none" stroke="#fff" strokeWidth="1.600">
          <circle cx="15.500" cy="5" r="4.200" /><path d="M10.500 13.500c2-5.500 9-5.500 10.500 1.500" />
          <circle cx="6.500" cy="13.500" r="3.800" /><path d="M.8 23.500c1-8 10.500-8 11.700-.5" />
        </svg>
        <svg width="18" height="11" viewBox="0 0 18 11" className="ml-[34px]"><path d="M.7 10L9 1l8.300 9" fill="none" stroke="#fff" strokeWidth="1.500" /></svg>
        <svg width="24" height="26" viewBox="0 0 24 26" className="ml-[15px]" fill="none">
          <path d="M2 12h17M8 12c4 0 2-8 5-8M8 12c4 1 2 9 6 9" stroke="#0a0a0a" strokeWidth="4" />
          <path d="M0 7.500h7v9H0zM18 6l6 6.500-6 6zM13 17h7v8h-7z" fill="#0a0a0a" />
          <circle cx="12" cy="3.500" r="3.300" fill="#0a0a0a" />
          <path d="M2 12h17M8 12c4 0 2-8 5-8M8 12c4 1 2 9 6 9" stroke="#999" strokeWidth="1.600" />
          <path d="M1.500 9h4.500v6H1.500zM14.500 18.500h4.500v5h-4.500zM19 8.500l4 4-4 4z" fill="#b5b5b5" />
          <circle cx="12" cy="3.500" r="1.700" fill="#aaa" />
        </svg>
        <svg width="24" height="24" viewBox="0 0 24 24" className="ml-[12px]">
          <path d="M8 3c3 0 4 0 7-1.500C19-1 23.500-.5 23 3c-.5 5-4 8-3 11 .5 3 5 4 3 8-2 3-6 1-8-1-3-3-5-1-9 0-3 1-7-1-6-5 1-3 4-2 5-5C5 7 4 3 8 3z" fill="#ff7800" />
          <text x="6.800" y="16.500" fontFamily="Liberation Sans" fontSize="17" fontWeight="700" fill="#fff">a</text>
        </svg>
        <svg width="25" height="18" viewBox="0 0 25 18" className="ml-[12px]" fill="none" stroke="#fff" strokeWidth="1.200">
          <path d="M9.500 4.500H22v12H5.500V12M22 8h2v5h-2" /><path d="M12 6v9H7.500v-4l3-5z" fill="#fff" stroke="none" />
          <path d="M1 3.500h6v4l-2 2H3l-2-2zM2.500 0v3.500M5.500 0v3.500M4 9.500V16" />
        </svg>
        <svg width="23" height="20" viewBox="0 0 23 20" className="ml-[12px]" fill="none" stroke="#fff" strokeWidth="1.200">
          <path d="M.6 6.500h4L9.500 1.500v17l-5-5h-4zM12.500 7.500q1.500 2.500 0 5M15.500 4.800q3.500 5 0 10.500M18.500 2q5.500 8 0 16" />
        </svg>
        <svg width="20" height="20" viewBox="0 0 20 20" className="ml-[16px]" fill="none" stroke="#ddd" strokeWidth="1.300">
          <path d="M.7 19.500C1.500 9 8 1.800 19 1M4.500 19.500C5.500 11 11 6.500 19 6M8.500 19.500c.5-5 4-8.500 10.500-8.500M12.500 19.500c0-3 2-4.500 6.500-4.800" />
          <circle cx="17.500" cy="18" r="1.700" fill="#fff" stroke="none" />
        </svg>
        <span className="ml-[18px] w-[32px] text-[17.500px] tracking-[-0.7px]">ESP</span>
        <div className="ml-[14px] flex w-[104px] flex-col items-center text-[18px] leading-[28px] tracking-[-0.05px]">
          <span>19:40</span>
          <span>07-07-2020</span>
        </div>
        <div className="relative ml-[24px] h-[36px] w-[38px]">
          <svg width="26" height="26" viewBox="0 0 26 26" className="absolute left-0 top-0">
            <path d="M0 0h24.500v19H14l-4 5-4-5H0z" fill="#fff" /><path d="M5 5.500h14M5 10h14M5 14.500h9" stroke="#333" strokeWidth="1.300" />
          </svg>
          <div className="absolute left-[11px] top-[12px] flex size-[26px] items-center justify-center rounded-full border border-[#999] bg-[#2b2e33]/90 text-[16px] font-semibold">5</div>
        </div>
        <div className="ml-auto mr-[6px] h-full w-[2px] bg-[#7d8289]" />
      </div>
    </div>
  );
}

export default function App() {
  return (
    <div className="flex h-[1080px] w-[1920px] flex-col overflow-hidden bg-[#0038b0]">
      <div className="flex h-[1020px] shrink-0">
        <div className="w-[12px] bg-[linear-gradient(180deg,#0038b0_0,#0040bc_155px,#0034ac_300px,#0033aa_500px,#0044c0_580px,#0034ac_760px,#0033aa_1020px)] shadow-[inset_-1px_0_0_#0a2a78]" />
        <div className="relative z-10 flex w-[1890px] flex-col border-t border-[#243f72] bg-[#b2b2b2]">
          <TitleBar />
          <TabBar />
          <Ribbon />
          <Banner />
          <div className="relative h-[708px] shrink-0 overflow-hidden bg-[#b2b2b2]">
            <Model />
            <ViewCube />
            <BrowserPanel />
          </div>
          <div className="ml-[3px] mr-[-2px] flex flex-1 flex-col bg-[#f1f1f1]">
            <div className="flex h-[37px] items-center border border-b-2 border-[#d2d2d2] pl-[8px] pt-[1px]">
              <MinusDot />
              <span className={`${cap} ml-[14.500px] mt-[1px] text-[16.500px] tracking-[0.05px] text-[#707070]`}>RENDERING GALLERY</span>
            </div>
          </div>
        </div>
        <div className="flex-1 border-l border-[#1d3f7c] bg-[linear-gradient(180deg,#3a84ea_0,#1c66dc_110px,#0a50cc_210px,#0040b4_290px,#0038ac_420px,#0038ac_650px,#0044bc_900px,#0046c0_1020px)]">
          <div className="mt-[282px] h-[12px] w-[2px] rounded-r-full bg-[#8a5a2c]" />
          <div className={`${ui} mt-[376px] w-[17px] overflow-hidden pl-[14px] text-[12px] leading-[14px] text-white`}>A</div>
        </div>
      </div>
      <Taskbar />
    </div>
  );
}
